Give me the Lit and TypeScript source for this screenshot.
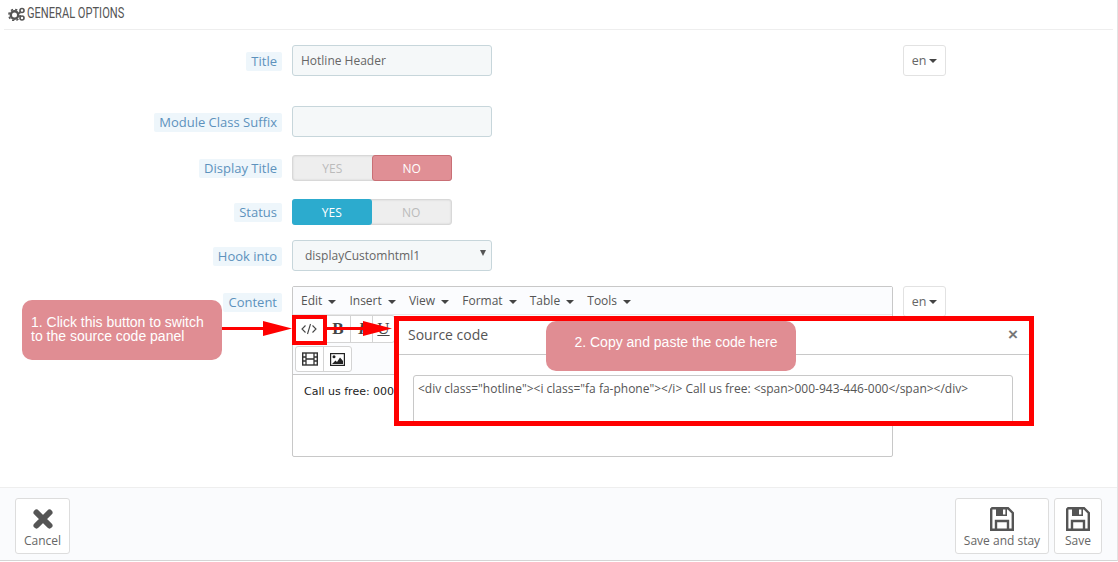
import { LitElement, html, css, svg } from "lit";
import { customElement } from "lit/decorators.js";

const caret = html`<span class="caret"></span>`;

const disk = svg`<path fill="none" stroke="#555" stroke-width="2.4" d="M2.2 1.2H18L22.8 6V22.8H1.2V2.2Z"/><rect x="6" y="1" width="11" height="8" fill="#555"/><rect x="13" y="2.500" width="2.400" height="5" fill="#fff"/><path fill="none" stroke="#555" stroke-width="2.400" d="M6 22.500V14H18V22.500"/>`;

@customElement("app-root")
export class AppRoot extends LitElement {
  static styles = css`
    :host { display: block; position: relative; width: 1118px; height: 562px; overflow: hidden; background: #fff; font-family: "Open Sans", sans-serif; font-size: 12px; color: #555; }
    .panel { box-sizing: border-box; width: 1118px; height: 561px; border-right: 1px solid #e3e3e3; border-bottom: 1px solid #d5d5d5; display: flex; flex-direction: column; }
    .head { box-sizing: border-box; height: 30px; margin: 0 4px; padding: 0 4px 2px; border-bottom: 1px solid #eee; display: flex; align-items: center; gap: 1px; }
    .head span { display: inline-block; font-family: "Roboto", sans-serif; font-size: 14.500px; color: #555; transform: scaleX(.765); transform-origin: left center; white-space: nowrap; }
    .form { flex: 1; padding-top: 15px; }
    .row { display: flex; align-items: flex-start; }
    .lab { box-sizing: border-box; width: 282px; margin-right: 10px; text-align: right; font-size: 13px; }
    .lab span { display: inline-block; background: #eef6fb; color: #5d92bd; padding: 0 5px; border-radius: 2px; line-height: 19px; white-space: nowrap; }
    .mt30 { margin-top: 30px; }
    .mt18 { margin-top: 18px; }
    .mt15 { margin-top: 15px; }
    .field .lab { padding-top: 7px; }
    .sw .lab { padding-top: 4px; }
    .input { box-sizing: border-box; width: 200px; height: 31px; background: #f5f8f9; border: 1px solid #c7d6db; border-radius: 3px; padding: 0 8px; line-height: 29px; color: #666; position: relative; }
    .select { padding: 0 12px; }
    .select i { position: absolute; right: 5px; top: 9px; width: 0; height: 0; border: 3.500px solid transparent; border-top: 6px solid #555; border-bottom: 0; }
    .en { box-sizing: border-box; width: 43px; height: 31px; margin-left: 411px; border: 1px solid #e2e2e2; border-radius: 3px; display: flex; align-items: center; justify-content: center; color: #666; font-size: 12.500px; }
    .en2 { margin-left: 10px; }
    .caret { display: inline-block; width: 0; height: 0; border: 4px solid transparent; border-top: 4px solid #444; border-bottom: 0; margin-left: 3px; vertical-align: middle; }
    .switch { display: flex; width: 160px; height: 26px; box-sizing: border-box; border-radius: 3px; background: #eee; border: 1px solid #d8d8d8; box-shadow: inset 0 0 2px #ccc; font-size: 12px; }
    .switch div { flex: 1; display: flex; align-items: center; justify-content: center; color: #bbb; }
    .switch .no { background: #e08f95; color: #fff; margin: -1px -1px -1px 0; border: 1px solid #c96f75; border-radius: 3px; }
    .switch .yes { background: #2cabce; color: #fff; margin: -1px 0 -1px -1px; border-radius: 3px; }
    .editor { box-sizing: border-box; width: 601px; height: 171px; border: 1px solid #c8c8c8; border-radius: 2px; background: #fff; }
    .menu { height: 27px; background: #fbfcfe; border-bottom: 1px solid #e8e8e8; display: flex; align-items: center; padding-left: 8px; gap: 13px; color: #555; }
    .menu span { white-space: nowrap; }
    .tools { padding: 0 0 0 2px; height: 59px; border-bottom: 1px solid #c8c8c8; background: #fbfcfe; }
    .group { display: inline-flex; height: 26px; border: 1px solid #d4d4d4; border-radius: 3px; background: #fff; box-sizing: border-box; }
    .group div { display: flex; align-items: center; justify-content: center; width: 27px; border-right: 1px solid #d4d4d4; font-family: "Liberation Serif", serif; font-size: 17px; color: #444; }
    .group div:last-child { border-right: 0; }
    .g1 { display: flex; height: 28px; }
    .g1 .group { height: 28px; }
    .g1 .group div { width: 21px; }
    .g1 .group div.code { width: 30px; box-sizing: border-box; padding-right: 3px; }
    .g1 .group div.b { width: 24px; }
    .g2 { margin-top: 3px; display: flex; }
    .body { box-sizing: border-box; width: 101px; padding: 10px 0 0 11px; font-family: "DejaVu Sans", sans-serif; font-size: 11px; color: #222; line-height: 14px; white-space: nowrap; overflow: hidden; }
    .foot { box-sizing: border-box; height: 73px; background: #fafbfd; border-top: 1px solid #eee; padding: 10px 15px 0; display: flex; justify-content: space-between; }
    .btns { display: flex; gap: 5px; }
    .btn { box-sizing: border-box; height: 56px; border: 1px solid #ddd; border-radius: 3px; background: #fff; display: flex; flex-direction: column; align-items: center; padding-top: 8px; font-size: 12px; color: #666; }
    .btn svg { display: block; height: 24px; width: 24px; margin-bottom: 1px; }
    .b-cancel { width: 55px; }
    .b-stay { width: 94px; }
    .b-save { width: 48px; }
    .modal { position: absolute; left: 394px; top: 316px; width: 640px; height: 110px; box-sizing: border-box; border: 5px solid #f00; background: #fff; overflow: hidden; }
    .m-head { box-sizing: border-box; height: 34px; border-bottom: 1px solid #c8c8c8; display: flex; align-items: center; justify-content: space-between; padding: 0 11px 6px 9px; font-size: 14px; color: #555; }
    .m-head b { font-family: "Liberation Sans", sans-serif; font-size: 17px; line-height: 14px; color: #777; }
    .ta { margin: 20px 0 0 14px; width: 600px; height: 60px; box-sizing: border-box; border: 1px solid #c8c8c8; border-radius: 3px; padding: 5px 4px; font-size: 12px; line-height: 16px; color: #555; white-space: nowrap; }
    .call { position: absolute; background: #e08d93; color: #fff; font-family: "Liberation Sans", sans-serif; font-size: 14px; line-height: 14px; border-radius: 10px; box-sizing: border-box; }
    .c1 { left: 22px; top: 300px; width: 200px; height: 60px; padding: 15px 9px; }
    .c2 { left: 546px; top: 321px; width: 250px; height: 50px; padding: 0 0 8px 10px; display: flex; align-items: center; justify-content: center; }
    .codebox { position: absolute; left: 292px; top: 315px; width: 35px; height: 30px; box-sizing: border-box; border: 4px solid #f00; }
    .arrows { position: absolute; left: 0; top: 0; width: 1118px; height: 562px; pointer-events: none; }
  `;

  render() {
    return html`
      <div class="panel">
        <div class="head">
          <svg width="18" height="14" viewBox="0 0 18 14"><circle cx="6.500" cy="8" r="3.700" fill="none" stroke="#555" stroke-width="2.400"/><circle cx="6.500" cy="8" r="5.600" fill="none" stroke="#555" stroke-width="1.600" stroke-dasharray="2.200 2.200"/><circle cx="14" cy="3.500" r="2" fill="none" stroke="#555" stroke-width="1.600"/><circle cx="14" cy="11" r="2" fill="none" stroke="#555" stroke-width="1.600"/></svg>
          <span>GENERAL OPTIONS</span>
        </div>
        <div class="form">
          <div class="row field"><div class="lab"><span>Title</span></div><div class="input">Hotline Header</div><div class="en">en${caret}</div></div>
          <div class="row field mt30"><div class="lab"><span>Module Class Suffix</span></div><div class="input"></div></div>
          <div class="row sw mt18"><div class="lab"><span>Display Title</span></div><div class="switch"><div>YES</div><div class="no">NO</div></div></div>
          <div class="row sw mt18"><div class="lab"><span>Status</span></div><div class="switch"><div class="yes">YES</div><div>NO</div></div></div>
          <div class="row field mt15"><div class="lab"><span>Hook into</span></div><div class="input select">displayCustomhtml1<i></i></div></div>
          <div class="row field mt15">
            <div class="lab"><span>Content</span></div>
            <div class="editor">
              <div class="menu"><span>Edit ${caret}</span><span>Insert ${caret}</span><span>View ${caret}</span><span>Format ${caret}</span><span>Table ${caret}</span><span>Tools ${caret}</span></div>
              <div class="tools">
                <div class="g1"><div class="group">
                  <div class="code"><svg width="16" height="12" viewBox="0 0 16 12"><path fill="none" stroke="#444" stroke-width="1.100" d="M4.500 2.500 1 6l3.500 3.500M11.500 2.500 15 6l-3.500 3.500M9.500 1 6.500 11"/></svg></div>
                  <div class="b" style="font-weight:700">B</div><div style="font-style:italic;font-weight:700">I</div><div style="text-decoration:underline">U</div>
                </div></div>
                <div class="g2"><div class="group">
                  <div><svg width="16" height="14" viewBox="0 0 16 14"><rect x=".7" y="1" width="14.600" height="12" fill="none" stroke="#333" stroke-width="1.400"/><path fill="none" stroke="#333" stroke-width="1.300" d="M4 1v12M12 1v12M.7 5h3.300M.7 9h3.300M12 5h3.300M12 9h3.300M4 7h8"/></svg></div>
                  <div><svg width="15" height="13" viewBox="0 0 15 13"><rect x=".6" y=".6" width="13.800" height="11.800" fill="none" stroke="#222" stroke-width="1.200"/><circle cx="4" cy="3.800" r="1.500" fill="#222"/><path fill="#222" d="M2 11 5.500 7.500 7 9l3-4.500 3 3.500V11Z"/></svg></div>
                </div></div>
              </div>
              <div class="body">Call us free: 000</div>
            </div>
            <div class="en en2">en${caret}</div>
          </div>
        </div>
        <div class="foot">
          <div class="btns"><div class="btn b-cancel"><svg viewBox="0 0 24 24"><path fill="none" stroke="#555" stroke-width="6" stroke-linecap="round" d="M5.500 5.500 18.500 18.500M18.500 5.500 5.500 18.500"/></svg>Cancel</div></div>
          <div class="btns">
            <div class="btn b-stay"><svg viewBox="0 0 24 24">${disk}</svg>Save and stay</div>
            <div class="btn b-save"><svg viewBox="0 0 24 24">${disk}</svg>Save</div>
          </div>
        </div>
      </div>
      <div class="codebox"></div>
      <div class="modal">
        <div class="m-head"><span>Source code</span><b>×</b></div>
        <div class="ta">&lt;div class="hotline"&gt;&lt;i class="fa fa-phone"&gt;&lt;/i&gt; Call us free: &lt;span&gt;000-943-446-000&lt;/span&gt;&lt;/div&gt;</div>
      </div>
      <svg class="arrows" viewBox="0 0 1118 562">
        <path fill="#f00" d="M221 327h42v-6l29 7.500-29 7.500v-6h-42ZM327 327h36v-6l29 7.500-29 7.500v-6h-36Z"/>
      </svg>
      <div class="call c1">1. Click this button to switch<br>to the source code panel</div>
      <div class="call c2">2. Copy and paste the code here</div>
    `;
  }
}
